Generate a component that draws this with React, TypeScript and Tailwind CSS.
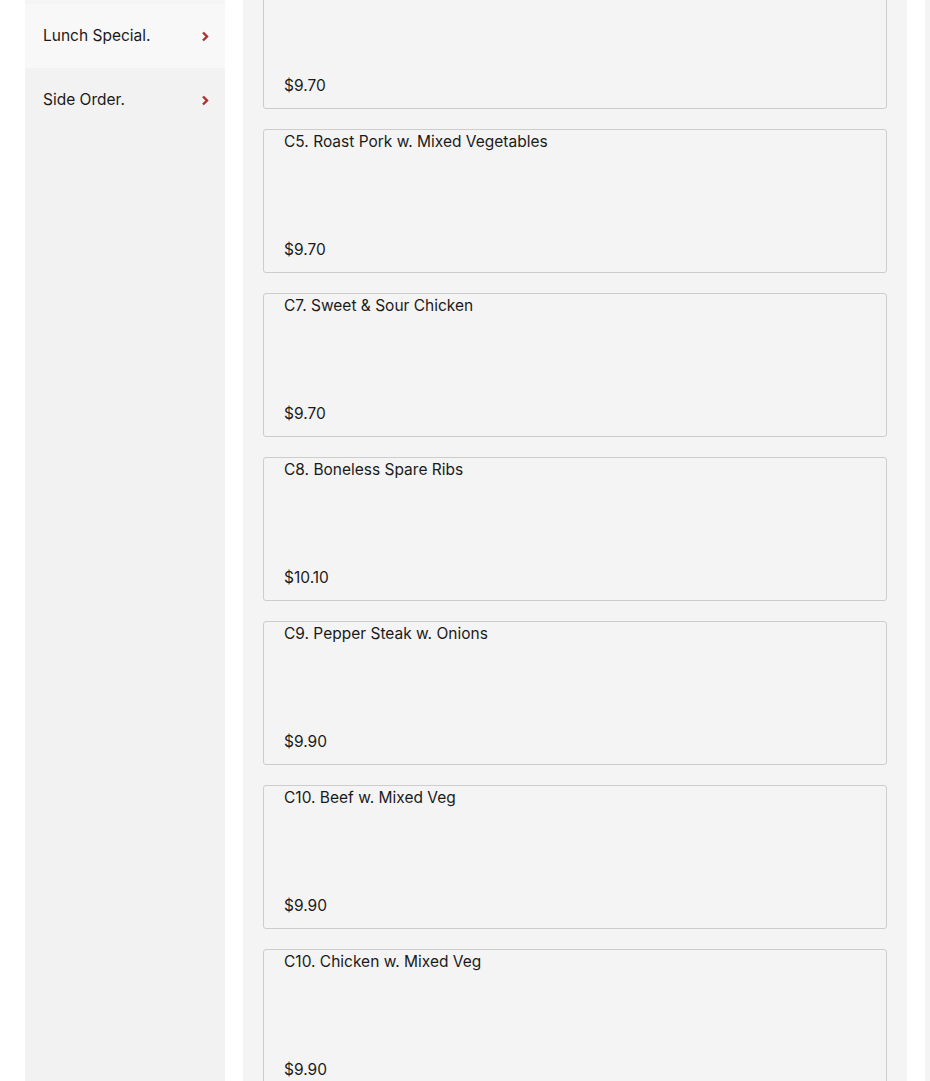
import React from "react";

const items = [
  { name: "", price: "$9.70" },
  { name: "C5. Roast Pork w. Mixed Vegetables", price: "$9.70" },
  { name: "C7. Sweet & Sour Chicken", price: "$9.70" },
  { name: "C8. Boneless Spare Ribs", price: "$10.10" },
  { name: "C9. Pepper Steak w. Onions", price: "$9.90" },
  { name: "C10. Beef w. Mixed Veg", price: "$9.90" },
  { name: "C10. Chicken w. Mixed Veg", price: "$9.90" },
];

function Chevron() {
  return (
    <svg width="8" height="11" viewBox="0 0 8 11" className="shrink-0">
      <path d="M2 1.5 L6 5.5 L2 9.5" fill="none" stroke="#b32d2d" strokeWidth="2.4" strokeLinecap="butt" strokeLinejoin="miter" />
    </svg>
  );
}

export default function App() {
  return (
    <div
      className="w-[930px] h-[1081px] overflow-hidden bg-white flex text-[#1a1a1a]"
      style={{ fontFamily: "Inter, 'Noto Sans', sans-serif" }}
    >
      <div className="ml-[25px] w-[200px] shrink-0 bg-[#f2f2f2] flex flex-col">
        <div className="h-[4px] bg-[#f5f5f5]" />
        <div className="h-[64px] bg-[#f8f8f8] flex items-center justify-between pl-[18px] pr-[16px]">
          <span className="text-[15.5px]">Lunch Special.</span>
          <Chevron />
        </div>
        <div className="h-[64px] bg-[#f2f2f2] flex items-center justify-between pl-[18px] pr-[16px]">
          <span className="text-[15.5px]">Side Order.</span>
          <Chevron />
        </div>
      </div>
      <div className="ml-[18px] w-[664px] shrink-0 bg-[#f4f4f4] px-[20px] overflow-hidden">
        <div className="-mt-[35px] flex flex-col gap-[20px]">
          {items.map((it, i) => (
            <div
              key={i}
              className="h-[144px] shrink-0 border border-[#cdcdcd] rounded-[3px] bg-[#f4f4f4] flex flex-col justify-between pl-[20px] pt-[2px] pb-[12px]"
            >
              <div className="text-[15.5px] leading-[20px]">{it.name}</div>
              <div className="text-[15.5px] leading-[20px]">{it.price}</div>
            </div>
          ))}
        </div>
      </div>
      <div className="ml-[18px] flex-1 bg-[#f4f4f4]" />
    </div>
  );
}
